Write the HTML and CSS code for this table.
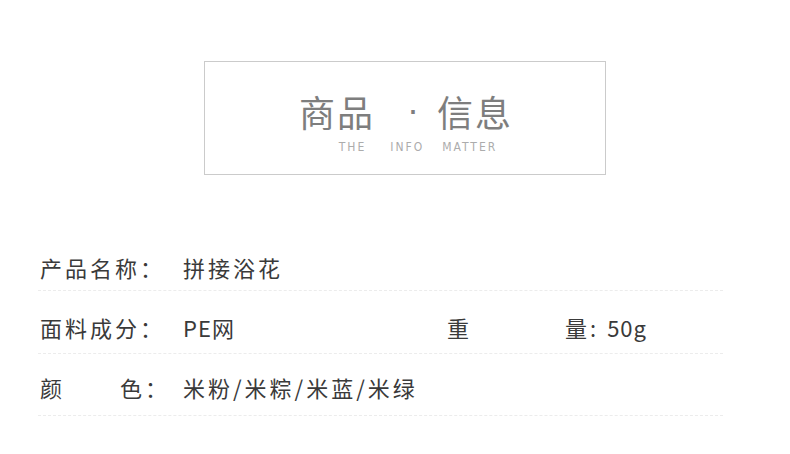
FILE: index.html
```html
<!DOCTYPE html>
<html lang="zh-CN">
<head>
<meta charset="utf-8">
<title>商品信息</title>
<link rel="stylesheet" href="styles.css">
</head>
<body>
<section class="header">
  <h1 class="title"><span>商品</span><span class="dot">·</span><span>信息</span></h1>
  <p class="subtitle"><span>THE</span><span class="w2">INFO</span><span class="w3">MATTER</span></p>
</section>
<section class="info">
  <div class="row row1">
    <span class="label">产品名称：</span>
    <span class="value">拼接浴花</span>
  </div>
  <div class="row row2">
    <span class="label">面料成分：</span>
    <span class="value short">PE网</span>
    <span class="label2"><span>重</span><span class="gap2">量:</span></span><span class="num">50g</span>
  </div>
  <div class="row row3">
    <span class="label"><span>颜</span><span class="gap3">色：</span></span>
    <span class="value">米粉/米粽/米蓝/米绿</span>
  </div>
</section>
</body>
</html>
```
FILE: styles.css
```css
body {
  margin: 0;
  background: #ffffff;
  font-family: "Noto Sans CJK SC", "Noto Sans", sans-serif;
}

.header {
  box-sizing: border-box;
  margin: 61px 0 0 204px;
  width: 402px;
  height: 114px;
  border: 1px solid #cbcbcb;
  padding-top: 29px;
  text-align: center;
}

.title {
  margin: 0;
  height: 40px;
  font-size: 36px;
  line-height: 40px;
  font-weight: 400;
  color: #7e7e7e;
  letter-spacing: 2px;
  display: flex;
  align-items: center;
  justify-content: center;
  padding-left: 2px;
}

.title .dot {
  margin: 0 16px 0 32px;
  padding-bottom: 2px;
  font-family: "Liberation Sans", sans-serif;
}

.subtitle {
  margin: 9px 0 0;
  font-family: "DejaVu Sans Condensed", "Liberation Sans Narrow", "Liberation Sans", sans-serif;
  font-stretch: condensed;
  font-size: 12px;
  line-height: 14px;
  letter-spacing: 2px;
  color: #acacac;
  display: flex;
  justify-content: center;
  padding-left: 26px;
}

.subtitle .w2 { margin-left: 24px; }
.subtitle .w3 { margin-left: 18px; }

.info {
  margin: 57px 0 0 38px;
  width: 685px;
}

.row {
  display: flex;
  align-items: center;
  padding-left: 2px;
  font-size: 22px;
  line-height: 22px;
  letter-spacing: 3px;
  color: #3a3a3a;
  border-bottom: 1px dashed #ececec;
}

.row1 { padding-top: 24px; padding-bottom: 12px; }
.row2 { padding-top: 25px; padding-bottom: 15px; }
.row3 { padding-top: 22px; padding-bottom: 17px; }

.label {
  width: 143px;
  flex: none;
  white-space: nowrap;
}

.value { white-space: nowrap; }
.value.short { width: 264px; flex: none; letter-spacing: 1px; }

.gap2 { margin-left: 93px; }
.gap3 { margin-left: 55px; }

.num {
  margin-left: 8px;
  letter-spacing: 1px;
}
```
